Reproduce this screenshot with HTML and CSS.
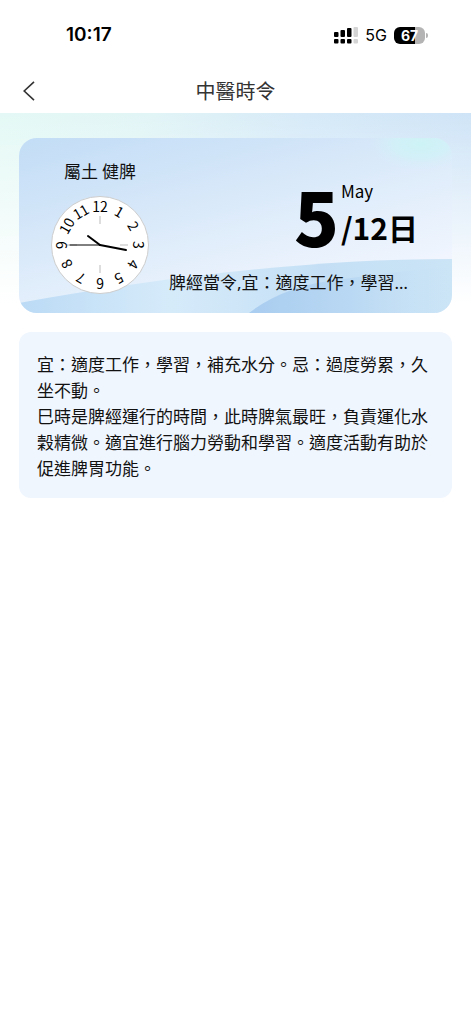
FILE: index.html
```html
<!DOCTYPE html>
<html lang="zh-Hant">
<head>
    <meta charset="UTF-8">
    <meta name="viewport" content="width=device-width, initial-scale=1.0">
    <title>中醫時令</title>
    <link rel="stylesheet" href="styles.css">
</head>
<body>
    <div class="status-bar">
        <span class="status-time">10:17</span>
        <div class="status-icons">
            <svg class="signal" width="24" height="17" viewBox="0 0 24 17" aria-hidden="true">
                <rect x="0" y="5" width="4.500" height="5" rx="1"/>
                <rect x="6.500" y="3" width="4.500" height="7" rx="1"/>
                <rect x="13" y="1" width="4.500" height="9" rx="1"/>
                <rect x="0" y="12" width="4.500" height="4.500" rx="1"/>
                <rect x="6.500" y="12" width="4.500" height="4.500" rx="1"/>
                <rect x="13" y="12" width="4.500" height="4.500" rx="1"/>
                <rect x="19.500" y="0" width="4.500" height="10" rx="1" fill="#d4d4d4"/>
                <rect x="19.500" y="12" width="4.500" height="4.500" rx="1" fill="#d4d4d4"/>
            </svg>
            <span class="network">5G</span>
            <div class="battery"><span class="battery-level">67</span></div>
        </div>
    </div>

    <header class="nav-bar">
        <button class="back-button" aria-label="返回">
            <svg width="12" height="20" viewBox="0 0 12 20" fill="none" stroke="#333" stroke-width="1.6">
                <path d="M11 .8 1.2 10 11 19.200"/>
            </svg>
        </button>
        <h1 class="nav-title">中醫時令</h1>
    </header>

    <main class="page">
        <section class="season-card">
            <svg class="card-waves" viewBox="0 0 433 175" preserveAspectRatio="none" aria-hidden="true">
                <defs>
                    <linearGradient id="wave" x1="0" y1="0" x2="1" y2="0">
                        <stop offset="0" stop-color="#bbdaf5"/>
                        <stop offset=".35" stop-color="#d6ebfa"/>
                        <stop offset=".7" stop-color="#c4dff5"/>
                        <stop offset="1" stop-color="#cbe4f6"/>
                    </linearGradient>
                    <linearGradient id="hill" x1="0" y1="0" x2="1" y2="0">
                        <stop offset="0" stop-color="#a9cdf0"/>
                        <stop offset=".5" stop-color="#b9d8f3"/>
                        <stop offset="1" stop-color="#cae3f6" stop-opacity="0"/>
                    </linearGradient>
                    <radialGradient id="glow">
                        <stop offset="0" stop-color="#cdf3f6"/>
                        <stop offset=".5" stop-color="#d0f2f7" stop-opacity=".8"/>
                        <stop offset="1" stop-color="#d8eff9" stop-opacity="0"/>
                    </radialGradient>
                </defs>
                <ellipse cx="402" cy="6" rx="52" ry="26" fill="url(#glow)"/>
                <path d="M0 165C130 142 280 121 433 121V175H0Z" fill="url(#wave)"/>
                <path d="M230 175Q262 150 310 143T433 128V175Z" fill="url(#hill)"/>
            </svg>
            <div class="card-left">
                <p class="element">屬土 健脾</p>
                <svg class="clock" width="98" height="98" viewBox="-49 -49 98 98" role="img" aria-label="10:17">
                    <circle r="48.500" fill="#fff" stroke="#ccc"/>
                    <path d="M0-29v8M0 20v8M-33 0h10M20 0h8" stroke="#bbb"/>
                    <g class="clock-numbers">
                        <text y="-33">12</text>
                        <text y="-33" transform="rotate(30)">1</text>
                        <text y="-33" transform="rotate(60)">2</text>
                        <text y="-33" transform="rotate(90)">3</text>
                        <text y="-33" transform="rotate(120)">4</text>
                        <text y="-33" transform="rotate(150)">5</text>
                        <text y="-33" transform="rotate(180)">6</text>
                        <text y="-33" transform="rotate(210)">7</text>
                        <text y="-33" transform="rotate(240)">8</text>
                        <text y="-33" transform="rotate(270)">9</text>
                        <text y="-33" transform="rotate(300)">10</text>
                        <text y="-33" transform="rotate(330)">11</text>
                    </g>
                    <g stroke="#000" stroke-linecap="round">
                        <path d="M0 0-30 0"/>
                        <path d="M0 0-12-9" stroke-width="2"/>
                        <path d="M0 0 26 5" stroke-width="2"/>
                    </g>
                </svg>
            </div>
            <div class="card-right">
                <div class="date">
                    <span class="month">5</span>
                    <div class="date-detail">
                        <span class="month-name">May</span>
                        <span class="day">/12日</span>
                    </div>
                </div>
                <p class="summary">脾經當令,宜：適度工作，學習…</p>
            </div>
        </section>

        <section class="advice">
            <p>宜：適度工作，學習，補充水分。忌：過度勞累，久坐不動。</p>
            <p>巳時是脾經運行的時間，此時脾氣最旺，負責運化水穀精微。適宜進行腦力勞動和學習。適度活動有助於促進脾胃功能。</p>
        </section>
    </main>
</body>
</html>
```

FILE: styles.css
```css
* {
    box-sizing: border-box;
}
body {
    margin: 0;
    background: #fff;
    color: #111;
    font-family: "Noto Sans CJK TC", "Noto Sans", sans-serif;
    font-size: 17px;
    line-height: 26px;
}
h1, p {
    margin: 0;
    font-weight: 400;
}
.status-bar {
    display: flex;
    justify-content: space-between;
    align-items: center;
    height: 68px;
    padding: 2px 46px 0 66px;
    font-family: Inter, sans-serif;
    color: #000;
}
.status-time {
    font-size: 19px;
    font-weight: 600;
}
.status-icons {
    display: flex;
    align-items: center;
    gap: 7px;
}
.network {
    font-size: 16px;
}
.battery {
    position: relative;
    width: 31px;
    height: 17px;
    border-radius: 6px;
    background: linear-gradient(to right, #000 67%, #b4b4b4 67%);
    color: #fff;
    text-align: center;
}
.battery::after {
    content: "";
    position: absolute;
    left: 32px;
    top: 6px;
    width: 2px;
    height: 5px;
    border-radius: 0 2px 2px 0;
    background: #b4b4b4;
}
.battery-level {
    display: block;
    font-size: 14px;
    font-weight: 700;
    line-height: 17px;
}
.nav-bar {
    display: grid;
    grid-template-columns: 48px 1fr 48px;
    align-items: center;
    height: 45px;
}
.back-button {
    display: flex;
    padding: 0 0 0 23px;
    border: none;
    background: none;
    cursor: pointer;
}
.nav-title {
    color: #333;
    font-size: 20px;
    line-height: 28px;
    text-align: center;
}
.page {
    display: flex;
    flex-direction: column;
    gap: 19px;
    padding: 25px 19px;
    background:
        linear-gradient(to bottom, rgba(255, 255, 255, 0), #fff 190px),
        linear-gradient(to right, #e4f9f5, #e2f5f6 30%, #d6eaf8 65%, #cfe4f7);
}
.season-card {
    position: relative;
    display: flex;
    justify-content: space-between;
    gap: 20px;
    min-height: 175px;
    padding: 20px 34px 17px 32px;
    overflow: hidden;
    border-radius: 18px;
    background: linear-gradient(165deg, #c2ddf6, #d0e4f8 25%, #e2eefb 55%, #f0f5fe 80%);
}
.card-waves {
    position: absolute;
    inset: 0;
    width: 100%;
    height: 100%;
}
.card-left, .card-right {
    position: relative;
    display: flex;
    flex-direction: column;
}
.card-left {
    align-items: center;
    gap: 12px;
}
.clock {
    flex: none;
}
.clock-numbers {
    font-size: 14px;
    text-anchor: middle;
}
.card-right {
    flex: 1;
    min-width: 0;
    justify-content: flex-end;
    gap: 19px;
}
.date {
    display: flex;
    justify-content: flex-end;
    align-items: center;
    gap: 2px;
    color: #000;
}
.month {
    font-size: 74px;
    font-weight: 900;
    line-height: 72px;
}
.date-detail {
    display: flex;
    flex-direction: column;
}
.month-name {
    line-height: 24px;
}
.day {
    font-size: 30px;
    font-weight: 700;
    line-height: 48px;
}
.summary {
    overflow: hidden;
    font-family: "Noto Sans", "Noto Sans CJK TC", sans-serif;
    white-space: nowrap;
    text-overflow: ellipsis;
}
.advice {
    padding: 19px 18px 17px;
    border-radius: 12px;
    background: #f0f6fe;
}
```
